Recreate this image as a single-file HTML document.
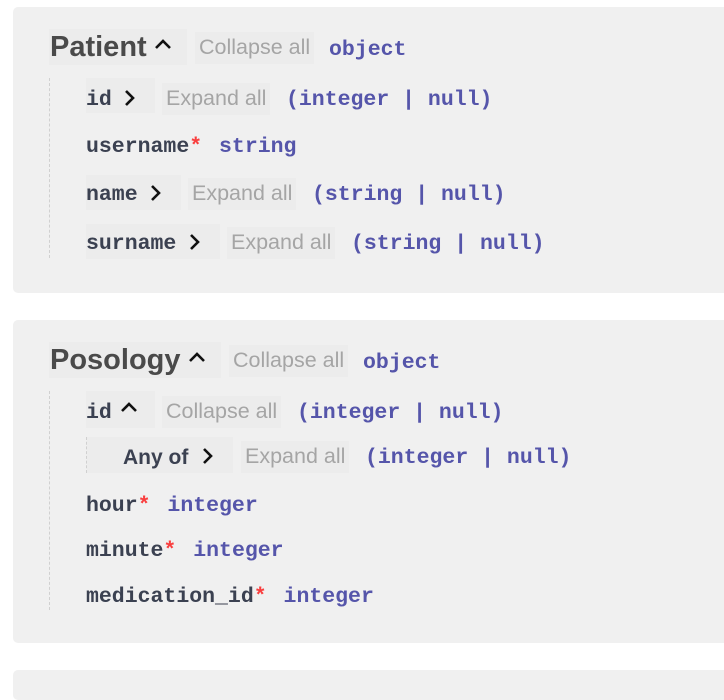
<!DOCTYPE html>
<html><head><meta charset="utf-8"><style>
body{margin:0;background:#fff;width:724px;height:676px;overflow:hidden;position:relative;font-family:"Liberation Sans",sans-serif}
.box{position:absolute;left:13px;width:740px;background:#f0f0f0;border-radius:5px}
.t{position:absolute;white-space:nowrap;line-height:1}
.title{font-weight:bold;font-size:29px;color:#4a4a4a}
.m{font-family:"Liberation Mono","DejaVu Sans Mono",monospace;font-weight:bold;font-size:21.5px;color:#3b4151}
.ty{color:#55a;font-family:"Liberation Mono","DejaVu Sans Mono",monospace;font-weight:bold;font-size:21.5px}
.g{color:#a5a5a5;font-size:21.5px;background:#ececec;padding:5px 4px}
.r{color:#f93e3e;margin-right:4px}
.hl{position:absolute;background:#ececec}
.vl{position:absolute;border-left:1px dashed #d0d0d0;width:0}
.ch{position:absolute}
</style></head><body>
<div class="box" style="top:7px;height:286px"></div>
<div class="box" style="top:320px;height:323px"></div>
<div class="box" style="top:670px;height:30px"></div>

<div class="hl" style="left:49px;top:29px;width:138px;height:36px"></div>
<div class="t title" style="left:50px;top:33px">Patient</div>
<svg class="ch" style="left:154px;top:38px" width="18" height="12"><path d="M2 10 L9 3 L16 10" stroke="#111" stroke-width="2.6" fill="none"/></svg>
<div class="t g" style="left:195px;top:32px">Collapse all</div>
<div class="t ty" style="left:329px;top:40px">object</div>
<div class="vl" style="left:49px;top:78px;height:180px"></div>

<div class="hl" style="left:86px;top:78px;width:69px;height:35px"></div>
<div class="t m" style="left:86px;top:90px">id</div>
<svg class="ch" style="left:124px;top:89px" width="12" height="18"><path d="M2 2 L9 9 L2 16" stroke="#111" stroke-width="2.6" fill="none"/></svg>
<div class="t g" style="left:162px;top:83px">Expand all</div>
<div class="t ty" style="left:286px;top:90px">(integer | null)</div>

<div class="t m" style="left:86px;top:137px">username<span class="r">*</span> <span style="color:#55a">string</span></div>

<div class="hl" style="left:86px;top:175px;width:95px;height:35px"></div>
<div class="t m" style="left:86px;top:185px">name</div>
<svg class="ch" style="left:150px;top:184px" width="12" height="18"><path d="M2 2 L9 9 L2 16" stroke="#111" stroke-width="2.6" fill="none"/></svg>
<div class="t g" style="left:188px;top:178px">Expand all</div>
<div class="t ty" style="left:312px;top:185px">(string | null)</div>

<div class="hl" style="left:86px;top:224px;width:134px;height:35px"></div>
<div class="t m" style="left:86px;top:234px">surname</div>
<svg class="ch" style="left:189px;top:233px" width="12" height="18"><path d="M2 2 L9 9 L2 16" stroke="#111" stroke-width="2.6" fill="none"/></svg>
<div class="t g" style="left:227px;top:227px">Expand all</div>
<div class="t ty" style="left:351px;top:234px">(string | null)</div>

<div class="hl" style="left:49px;top:342px;width:172px;height:36px"></div>
<div class="t title" style="left:50px;top:346px">Posology</div>
<svg class="ch" style="left:188px;top:351px" width="18" height="12"><path d="M2 10 L9 3 L16 10" stroke="#111" stroke-width="2.6" fill="none"/></svg>
<div class="t g" style="left:229px;top:345px">Collapse all</div>
<div class="t ty" style="left:363px;top:353px">object</div>
<div class="vl" style="left:49px;top:391px;height:219px"></div>

<div class="hl" style="left:86px;top:391px;width:69px;height:37px"></div>
<div class="t m" style="left:86px;top:403px">id</div>
<svg class="ch" style="left:120px;top:401px" width="18" height="12"><path d="M2 10 L9 3 L16 10" stroke="#111" stroke-width="2.6" fill="none"/></svg>
<div class="t g" style="left:162px;top:396px">Collapse all</div>
<div class="t ty" style="left:297px;top:403px">(integer | null)</div>

<div class="vl" style="left:86px;top:437px;height:36px"></div>
<div class="hl" style="left:87px;top:437px;width:146px;height:36px"></div>
<div class="t" style="left:123px;top:447px;font-weight:bold;font-size:21px;color:#3b4151">Any of</div>
<svg class="ch" style="left:202px;top:447px" width="12" height="18"><path d="M2 2 L9 9 L2 16" stroke="#111" stroke-width="2.6" fill="none"/></svg>
<div class="t g" style="left:241px;top:441px">Expand all</div>
<div class="t ty" style="left:365px;top:448px">(integer | null)</div>

<div class="t m" style="left:86px;top:496px">hour<span class="r">*</span> <span style="color:#55a">integer</span></div>
<div class="t m" style="left:86px;top:541px">minute<span class="r">*</span> <span style="color:#55a">integer</span></div>
<div class="t m" style="left:86px;top:587px">medication_id<span class="r">*</span> <span style="color:#55a">integer</span></div>
</body></html>
